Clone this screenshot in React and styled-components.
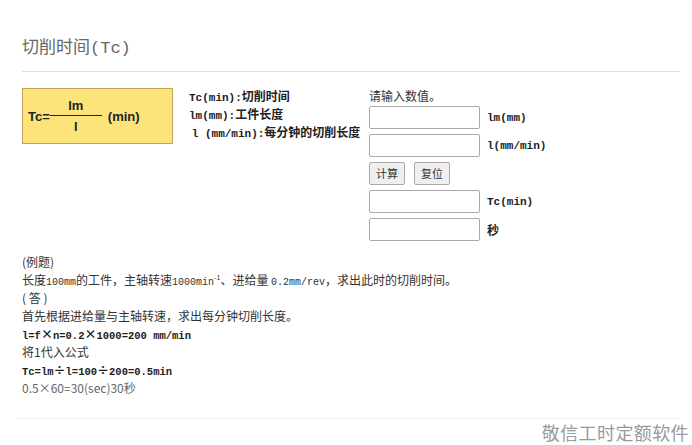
import React from 'react';
import styled, { createGlobalStyle } from 'styled-components';

const GlobalStyle = createGlobalStyle`
  html, body {
    margin: 0;
    padding: 0;
    background: #fff;
  }
  body {
    font-family: "Noto Sans CJK SC", sans-serif;
    color: #333;
  }
`;

const Page = styled.div`
  position: relative;
  width: 692px;
  height: 445px;
  padding: 37px 12px 0 22px;
  box-sizing: border-box;
  overflow: hidden;
`;

const Title = styled.h1`
  margin: 0;
  padding-bottom: 10px;
  border-bottom: 1px solid #dedede;
  font-family: "Liberation Mono", "Noto Sans CJK SC", monospace;
  font-size: 17px;
  font-weight: 400;
  line-height: 24px;
  color: #666;
`;

const Row = styled.div`
  display: flex;
  align-items: flex-start;
  margin-top: 15px;
`;

const FormulaBox = styled.div`
  width: 151px;
  height: 56px;
  box-sizing: border-box;
  margin-top: 1px;
  padding-left: 5px;
  display: flex;
  align-items: center;
  background: #fde47a;
  border: 1px solid #c4a555;
  font-family: "Liberation Sans", Arial, sans-serif;
  font-weight: 700;
  font-size: 13px;
  color: #222;
`;

const Fraction = styled.div`
  display: flex;
  flex-direction: column;
  align-items: center;
  width: 52px;
  margin: 0 6px 0 0;
  line-height: 13px;
`;

const FracLine = styled.div`
  align-self: stretch;
  height: 1.5px;
  background: #222;
  margin: 3px 0 4px;
`;

const Defs = styled.div`
  width: 180px;
  margin-left: 16px;
  font-size: 12px;
  font-weight: 700;
  line-height: 18px;
  color: #222;

  & > div {
    height: 18px;
    white-space: nowrap;
  }
`;

const M = styled.span`
  font-family: "Liberation Mono", monospace;
  font-size: ${p => p.$size || 10}px;
  line-height: 1;
`;

const Form = styled.div`
  display: flex;
  flex-direction: column;
  gap: 5px;
  width: 170px;
`;

const Hint = styled.div`
  font-size: 12px;
  line-height: 18px;
  margin-bottom: -4px;
  color: #333;
`;

const Field = styled.div`
  display: flex;
  align-items: center;
  gap: 7px;
`;

const Input = styled.input`
  width: 111px;
  height: 23px;
  box-sizing: border-box;
  border: 1px solid #a9a9a9;
  border-radius: 2px;
  background: #fff;
  padding: 2px 4px;
`;

const Unit = styled.span`
  font-family: "Liberation Mono", "Noto Sans CJK SC", monospace;
  font-size: 11px;
  font-weight: 700;
  color: #222;
`;

const UnitCjk = styled.span`
  font-size: 12px;
  font-weight: 700;
  color: #222;
`;

const Buttons = styled.div`
  display: flex;
  gap: 9px;
`;

const Button = styled.button`
  height: 23px;
  padding: 0 6px;
  border: 1px solid #a9a9a9;
  border-radius: 2px;
  background: #efefef;
  font-family: "Noto Sans CJK SC", sans-serif;
  font-size: 11px;
  color: #333;
  line-height: 1;
`;

const Example = styled.div`
  margin-top: 12px;
  font-size: 12px;
  line-height: 18px;
  color: #333;
`;

const Line = styled.div`
  height: 18px;
  white-space: nowrap;
  font-weight: ${p => (p.$bold ? 700 : 400)};
  color: ${p => (p.$muted ? '#666' : p.$bold ? '#222' : '#333')};
`;

const Sup = styled.sup`
  font-size: 7px;
  line-height: 0;
`;

const Rule = styled.div`
  margin: 21px 0 0 -5px;
  border-top: 1px solid #eeeeee;
`;

const Watermark = styled.div`
  position: absolute;
  right: 3px;
  bottom: 2px;
  font-size: 18px;
  letter-spacing: 0.4px;
  color: #9a9a9a;
  line-height: 22px;
`;

export default function App() {
  return (
    <Page>
      <GlobalStyle />
      <Title>切削时间(Tc)</Title>
      <Row>
        <FormulaBox>
          <span>Tc=</span>
          <Fraction>
            <span>lm</span>
            <FracLine />
            <span>l</span>
          </Fraction>
          <span>(min)</span>
        </FormulaBox>
        <Defs>
          <div><M $size={11}>Tc(min):</M>切削时间</div>
          <div><M $size={11}>lm(mm):</M>工件长度</div>
          <div>&nbsp;<M $size={11}>l (mm/min):</M>每分钟的切削长度</div>
        </Defs>
        <Form>
          <Hint>请输入数值。</Hint>
          <Field><Input /><Unit>lm(mm)</Unit></Field>
          <Field><Input /><Unit>l(mm/min)</Unit></Field>
          <Buttons>
            <Button>计算</Button>
            <Button>复位</Button>
          </Buttons>
          <Field><Input /><Unit>Tc(min)</Unit></Field>
          <Field><Input /><UnitCjk>秒</UnitCjk></Field>
        </Form>
      </Row>
      <Example>
        <Line>(例题)</Line>
        <Line>
          长度<M>100mm</M>的工件，主轴转速<M>1000min</M><Sup>-1</Sup>、进给量 <M>0.2mm/rev</M>，求出此时的切削时间。
        </Line>
        <Line>( 答 )</Line>
        <Line>首先根据进给量与主轴转速，求出每分钟切削长度。</Line>
        <Line $bold><M $size={10.5}>l=f</M>×<M $size={10.5}>n=0.2</M>×<M $size={10.5}>1000=200 mm/min</M></Line>
        <Line>将1代入公式</Line>
        <Line $bold><M $size={10.5}>Tc=lm</M>÷<M $size={10.5}>l=100</M>÷<M $size={10.5}>200=0.5min</M></Line>
        <Line $muted>0.5×60=30(sec)30秒</Line>
      </Example>
      <Rule />
      <Watermark>敬信工时定额软件</Watermark>
    </Page>
  );
}
